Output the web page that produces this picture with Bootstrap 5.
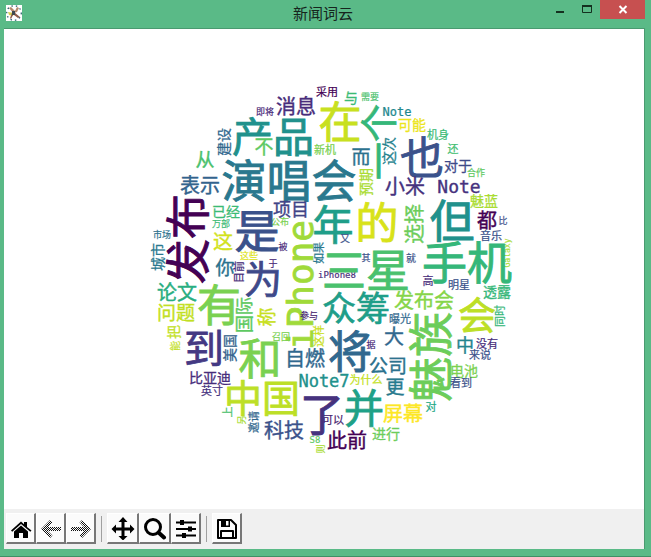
<!DOCTYPE html>
<html lang="zh-CN">
<head>
<meta charset="utf-8">
<meta name="viewport" content="width=device-width, initial-scale=1">
<title>新闻词云</title>
<link href="https://cdn.jsdelivr.net/npm/bootstrap@5.3.0/dist/css/bootstrap.min.css" rel="stylesheet">
<style>
body { background: #5aba87; font-family: "Noto Sans CJK SC", sans-serif; }
.window-frame { padding: 0 6px 7px 4px; border-bottom: 1px solid #3f8f66; }
.title-bar { height: 28px; }
.app-icon { width: 16px; height: 16px; margin: 5px 0 0 2px; }
.title-text { font-size: 15px; line-height: 26px; color: #16251d; padding-left: 78px; }
.win-btn { border: 0; padding: 0; height: 19px; width: 27px; background: none; color: #14301f; }
.win-close { width: 45px; background: #c75050; color: #fff; }
.client { border: 1px solid #4a9a70; border-width: 1px 1px 0 0; background: #fff; }
.cloud { display: block; width: 100%; min-height: 0; }
.cloud text { text-anchor: middle; stroke-width: 0.02em; }
.cloud .latin { font-family: "DejaVu Sans Mono", monospace; }
.tool-bar { background: #f0f0f0; height: 40px; padding: 4px 2px; }
.tool { width: 30px; height: 31px; padding: 0; background: #fbfbfb; color: #000; border: 1px solid #fff; border-right: 2px solid #777; border-bottom: 2px solid #777; }
.tool-wide { width: 32px; }
.tool svg { width: 24px; height: 24px; display: block; margin: auto; }
.divider { width: 1px; height: 26px; background: #a0a0a0; margin: 3px 5px 0; }
</style>
</head>
<body>
<div class="window-frame d-flex flex-column min-vh-100">
  <header class="title-bar d-flex">
    <svg class="app-icon" viewBox="0 0 16 16" aria-hidden="true">
      <path fill="#fff" d="M0 0h16v16H0z"/>
      <circle cx="8" cy="8" r="7.300" fill="none" stroke="#2f6070" stroke-width="1.300" stroke-dasharray="1.500 3"/>
      <path d="M8 9 3 3l2-1 4 4zM8 8l3-6 2 1-2 4z" fill="#b58a6c"/>
      <path d="M8 8 2 7l1 3 4 1z" fill="#d7cf4e"/>
      <path d="m8 7 6 5-2 1-4-3zM8 8l-3 6-1-1 2-5z" fill="#8d5e4b"/>
      <path d="M6 6h3v4H6z" fill="#3d4a50"/>
    </svg>
    <div class="title-text flex-grow-1 text-center">新闻词云</div>
    <div class="d-flex">
      <button class="win-btn" aria-label="最小化"><svg width="10" height="19" viewBox="0 0 10 19" class="d-block mx-auto"><path d="M1 12h8" stroke="currentColor" stroke-width="2"/></svg></button>
      <button class="win-btn" aria-label="最大化"><svg width="12" height="19" viewBox="0 0 12 19" class="d-block mx-auto"><path d="M1.500 6v6.500h9V6" fill="none" stroke="currentColor"/><path d="M1 6h10" stroke="currentColor" stroke-width="2"/></svg></button>
      <button class="win-btn win-close" aria-label="关闭"><svg width="10" height="19" viewBox="0 0 10 19" class="d-block mx-auto"><path d="m1.500 6 7 7m0-7-7 7" stroke="currentColor" stroke-width="2"/></svg></button>
    </div>
  </header>
  <main class="client flex-grow-1 d-flex flex-column">
    <svg class="cloud flex-grow-1" id="cloud" viewBox="4 29 640 480" role="img" aria-label="新闻词云"></svg>
    <nav class="tool-bar d-flex" aria-label="工具栏">
      <button class="tool" aria-label="主页"><svg viewBox="0 0 24 24"><path d="m2 14.500 10-9 3 2.700V6h3v5l4.500 3.500-1.200 1.200L12 8l-8.800 7.700z"/><path d="M5 15.500 12 9.500l7 6V22h-5v-5h-4v5H5z"/></svg></button>
      <button class="tool" aria-label="后退"><svg viewBox="0 0 24 24"><path fill="url(#dots)" d="m2 13 9-9 2.500 2.500-4.500 4.500h13v4H9l4.500 4.500L11 22z"/></svg></button>
      <button class="tool" aria-label="前进"><svg viewBox="0 0 24 24"><defs><pattern id="dots" width="2" height="2" patternUnits="userSpaceOnUse"><path fill="#fbfbfb" d="M0 0h2v2H0z"/><path fill="#111" d="M0 0h1v1H0zM1 1h1v1H1z"/></pattern></defs><path fill="url(#dots)" d="m22 13-9-9-2.500 2.500L15 11H2v4h13l-4.500 4.500L13 22z"/></svg></button>
      <span class="divider"></span>
      <button class="tool tool-wide" aria-label="平移"><svg viewBox="0 0 24 24"><path d="m12 1 4.500 5h-3v5.500H19v-3l4.500 4.500-4.500 4.500v-3h-5.500V20h3L12 24.500 7.500 20h3v-5.500H5v3L.5 13 5 8.500v3h5.500V6h-3z"/></svg></button>
      <button class="tool tool-wide" aria-label="缩放"><svg viewBox="0 0 24 24"><circle cx="10" cy="11" r="7.500" fill="none" stroke="#000" stroke-width="3"/><path d="m15.500 16.500 5.500 5" stroke="#000" stroke-width="4" stroke-linecap="round"/></svg></button>
      <button class="tool" aria-label="子图设置"><svg viewBox="0 0 24 24"><path d="M2 6.500h20M2 13h20M2 19.500h20" stroke="#000" stroke-width="2"/><path d="M6 4h4v5H6zM14 10.500h4v5h-4zM8 17h4v5H8z"/></svg></button>
      <span class="divider"></span>
      <button class="tool" aria-label="保存"><svg viewBox="0 0 24 24"><path fill="none" stroke="#000" stroke-width="2" stroke-linejoin="round" d="M3 4h13l5 5v13H3zM6 21v-6h12v6"/><path d="M6 4h9v7H6z"/><path fill="#fff" d="M11 5h2.500v4.500H11z"/></svg></button>
    </nav>
  </main>
</div>
<script>
// word, centre x, centre y, size, colour, 1 = reads upwards
const words = [
["即将",265,112,9,"#482878"],["采用",327,92,11,"#440154"],["消息",296,106,20,"#472d7b"],["与",351,98,14,"#3bbb75"],["需要",370,97,9,"#4ac16d"],
["在",340,122,43,"#c8e020"],["Note",397,111,12,"#23888e"],["一个",379,142,38,"#35b779",1],["产品",273,136,41,"#21918c"],["不",264,147,19,"#5ec962"],
["新机",325,150,11,"#7ad151"],["建设",224,142,14,"#31688e",1],["而",361,157,19,"#2c728e"],["预期",366,182,14,"#aadc32",1],["这次",389,151,14,"#26828e",1],
["可能",412,125,14,"#ece51b"],["机身",438,135,11,"#3bbb75"],["还",453,149,11,"#42be71"],["也",422,157,44,"#3b528b"],["对于",458,166,14,"#3e4989"],
["合作",476,173,9,"#5ec962"],["小米",405,186,20,"#46327e"],["Note",459,186,18,"#46327e"],["从",205,160,19,"#4ac16d"],["表示",200,185,20,"#33638d"],
["演唱会",289,181,45,"#2a788e"],["项目",291,209,18,"#414487"],["魅蓝",484,201,14,"#aadc32"],["都",487,220,20,"#440154"],["比",503,221,9,"#3b528b"],
["音乐",491,236,11,"#3b528b"],["Galaxy",507,253,8,"#aadc32",1],["发布",188,239,45,"#440154",1],["已经",226,212,14,"#3bbb75"],["万部",221,224,9,"#3bbb75"],
["这",223,241,20,"#d2e21b"],["这些",249,256,9,"#dde318"],["公布",280,222,9,"#7ad151"],["是",257,231,45,"#3b528b"],["市场",162,235,9,"#2c728e"],
["城市",158,257,14,"#2a788e",1],["你",225,268,19,"#2c728e"],["目前",239,272,11,"#472d7b",1],["为",263,279,38,"#3e4989"],["被",283,247,9,"#482878"],
["于",273,264,9,"#482878"],["论文",177,292,20,"#28ae80"],["问题",176,313,19,"#c2df23"],["有",219,305,44,"#7ad151"],["国际",244,315,18,"#5ec962",1],
["称",267,317,19,"#c8e020",1],["年",333,224,41,"#1f9e89"],["又",345,238,10,"#3b528b"],["的",377,223,43,"#d8e219"],["选择",414,224,20,"#6ccd5a",1],
["但",452,221,45,"#21918c"],["如果",319,253,11,"#2a788e",1],["其",366,258,9,"#3b528b"],["iPhone",299,285,36,"#a0da39",1],["iPhone8",337,275,9,"#472d7b"],
["三星",366,270,44,"#4ac16d"],["就",411,258,10,"#3b528b"],["手机",467,263,45,"#35b779"],["高",428,281,11,"#472d7b"],["明星",459,285,11,"#3b528b"],
["透露",497,292,14,"#35b779"],["同时",500,316,11,"#35b779",1],["发布会",424,300,20,"#86d549"],["曝光",400,319,11,"#31688e"],["会",477,315,38,"#bddf26"],
["众筹",356,308,34,"#1f9e89"],["参与",309,316,9,"#481f70"],["这样",319,336,11,"#c8e020",1],["大",394,336,20,"#31688e"],["中",465,345,18,"#25848e"],
["没有",487,344,11,"#472d7b"],["来说",480,355,11,"#3b528b"],["将",350,351,44,"#31688e"],["据",371,345,9,"#482878"],["魅族",431,357,45,"#6ccd5a",1],
["公司",388,366,19,"#2c728e"],["更",395,387,19,"#297a8e"],["电池",464,371,14,"#7ad151"],["看到",461,383,11,"#3b528b"],["为什么",366,380,11,"#c2df23"],
["并",364,408,40,"#1fa187"],["屏幕",403,413,20,"#fde725"],["对",431,407,11,"#22a884"],["进行",386,434,14,"#6ccd5a"],["此前",347,440,20,"#440154"],
["可以",333,420,11,"#481f70"],["了",322,414,44,"#46327e"],["Note7",324,381,17,"#21918c"],["自燃",305,358,20,"#31688e"],["和",260,359,43,"#7ad151"],
["召回",281,337,9,"#7ad151"],["到",204,348,40,"#443983"],["美国",230,348,14,"#33638d",1],["把",174,332,14,"#c2df23",1],["能",175,346,10,"#c2df23",1],
["比亚迪",210,378,14,"#472d7b"],["英寸",212,391,11,"#46327e"],["中国",262,398,38,"#bddf26"],["上",228,412,11,"#4ac16d",1],["另",242,420,9,"#aadc32",1],
["邀请",254,422,11,"#31688e",1],["科技",284,430,20,"#3b528b"],["S8",315,440,9,"#5ec962"],["则",321,449,9,"#aadc32",1]
];
const cloud = document.getElementById("cloud");
for (const [word, x, y, size, colour, up] of words) {
  const t = document.createElementNS("http://www.w3.org/2000/svg", "text");
  t.textContent = word;
  t.setAttribute("transform", `translate(${x} ${y})` + (up ? " rotate(-90)" : ""));
  t.setAttribute("dy", "0.38em");
  t.setAttribute("font-size", size);
  t.setAttribute("fill", colour);
  t.setAttribute("stroke", colour);
  if (/^[A-Z]/i.test(word)) t.setAttribute("class", "latin");
  cloud.appendChild(t);
}
</script>
<script src="https://cdn.jsdelivr.net/npm/bootstrap@5.3.0/dist/js/bootstrap.bundle.min.js"></script>
</body>
</html>
